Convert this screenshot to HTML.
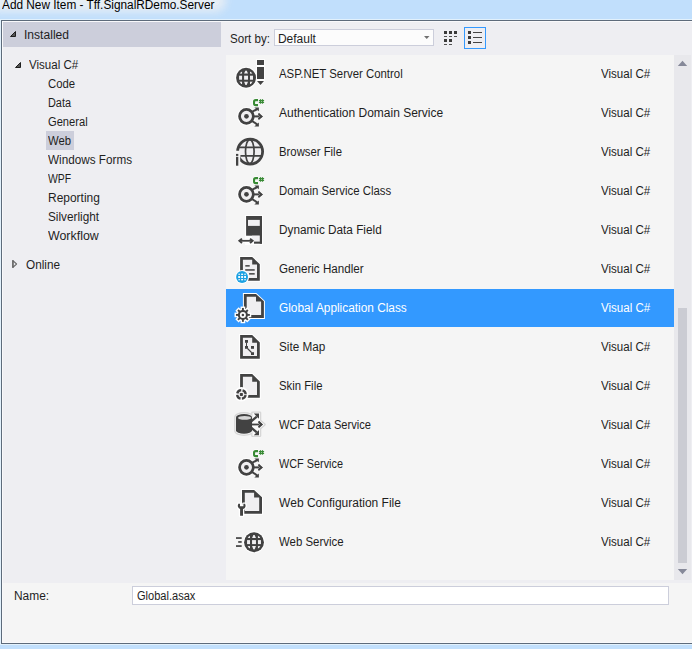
<!DOCTYPE html>
<html><head><meta charset="utf-8"><style>
html,body{margin:0;padding:0;}
body{width:692px;height:649px;overflow:hidden;position:relative;background:#c1dffc;font-family:"Liberation Sans",sans-serif;}
.r{position:absolute;}
.t{position:absolute;font-size:12px;line-height:15px;white-space:nowrap;transform-origin:0 0;}
</style></head><body>
<div class="r" style="left:-6px;top:-4px;width:226px;height:10px;border-radius:5px;background:rgba(232,238,244,0.95);box-shadow:0 0 9px 6px rgba(232,238,244,0.95);"></div>
<div class="r" style="left:0;top:19px;width:692px;height:626px;background:#e2f1fc;"></div>
<div class="r" style="left:1px;top:20px;width:700px;height:622px;border:1px solid #5d6b7b;border-right:none;background:#f9f9fb;"></div>
<div class="r" style="left:3px;top:22px;width:689px;height:561px;background:#eeeef2;"></div>
<div class="r" style="left:3px;top:583px;width:689px;height:59px;background:#f5f5f5;"></div>
<div class="r" style="left:3px;top:22px;width:218px;height:25px;background:#cccedb;"></div>
<div class="r" style="left:46px;top:131px;width:28px;height:19px;background:#cccedb;"></div>
<div class="r" style="left:226px;top:55px;width:448px;height:525px;background:#f5f5f5;"></div>
<div class="r" style="left:226px;top:289px;width:448px;height:38px;background:#3399ff;"></div>
<div class="r" style="left:674px;top:55px;width:17px;height:525px;background:#e8e8ec;"></div>
<div class="r" style="left:678px;top:308px;width:9px;height:255px;background:#cbccd3;"></div>
<div class="r" style="left:274px;top:29px;width:158px;height:15px;border:1px solid #cccedb;background:#fcfcfc;"></div>
<div class="r" style="left:464px;top:27px;width:20px;height:20px;border:1px solid #3399ff;background:#eeeef2;"></div>
<div class="r" style="left:132px;top:586px;width:535px;height:17px;border:1px solid #cccedb;background:#fff;"></div>
<svg class="r" style="left:0;top:0" width="692" height="649" viewBox="0 0 692 649">
<path d="M10.5 36.5 L15.5 36.5 L15.5 31.5 Z" fill="#555" stroke="#1e1e1e" stroke-width="1" stroke-linejoin="round"/>
<path d="M15.5 67.5 L20.5 67.5 L20.5 62.5 Z" fill="#555" stroke="#1e1e1e" stroke-width="1" stroke-linejoin="round"/>
<path d="M12.9 260.6 L16.6 264 L12.9 267.4 Z" fill="none" stroke="#6a6a6a" stroke-width="1.1" stroke-linejoin="round"/><rect x="12.2" y="260.2" width="1.4" height="7.6" fill="#666"/>
<path d="M677.8 66 L687.2 66 L682.5 60.8 Z" fill="#868999"/>
<path d="M677.8 569 L687.2 569 L682.5 574.2 Z" fill="#868999"/>
<path d="M424 36 L429.5 36 L426.75 39 Z" fill="#717171"/>
<rect x="444" y="31" width="3" height="3" fill="#3a3a3a"/>
<rect x="449" y="31" width="3" height="3" fill="#3a3a3a"/>
<rect x="454" y="31" width="3" height="3" fill="#3a3a3a"/>
<rect x="444" y="39" width="3" height="3" fill="#3a3a3a"/>
<rect x="449" y="39" width="3" height="3" fill="#3a3a3a"/>
<rect x="444" y="36" width="3" height="1" fill="#505050"/>
<rect x="449" y="36" width="3" height="1" fill="#505050"/>
<rect x="454" y="36" width="3" height="1" fill="#505050"/>
<rect x="444" y="44" width="3" height="1" fill="#505050"/>
<rect x="449" y="44" width="3" height="1" fill="#505050"/>
<rect x="468" y="31" width="3" height="3" fill="#3a3a3a"/>
<rect x="473" y="32" width="9" height="1" fill="#444"/>
<rect x="468" y="36" width="3" height="3" fill="#3a3a3a"/>
<rect x="473" y="37" width="9" height="1" fill="#444"/>
<rect x="468" y="41" width="3" height="3" fill="#3a3a3a"/>
<rect x="473" y="42" width="9" height="1" fill="#444"/>
<circle cx="246.05" cy="77.8" r="10.95" fill="#fff" opacity="0.9"/><circle cx="246.05" cy="77.8" r="9.95" fill="#424242"/><clipPath id="g0"><circle cx="246.05" cy="77.8" r="7.6"/></clipPath><g clip-path="url(#g0)" fill="#f0eff1"><rect x="238.05" y="69.8" width="4.0" height="3.8"/><polygon points="244.10000000000002,73.6 248.0,73.6 246.65,70.6 245.45000000000002,70.6"/><rect x="250.0" y="69.8" width="4.05" height="3.8"/><rect x="239.10000000000002" y="75.7" width="2.95" height="4.0"/><rect x="244.10000000000002" y="75.7" width="3.9" height="4.0"/><rect x="250.0" y="75.7" width="3.0" height="4.0"/><rect x="238.05" y="81.7" width="4.0" height="4.1"/><polygon points="244.10000000000002,81.7 248.0,81.7 246.65,85.0 245.45000000000002,85.0"/><rect x="250.0" y="81.7" width="4.05" height="4.1"/></g>
<g fill="#fff" opacity="0.8"><rect x="256" y="59" width="9" height="7"/><rect x="256" y="66" width="9" height="14"/><polygon points="255.5,80 265.5,80 260.5,86.5"/></g>
<rect x="257" y="60" width="7" height="5" fill="#424242"/><rect x="257" y="67" width="7" height="12" fill="#424242"/><polygon points="257,81 264,81 260.5,85" fill="#424242"/>
<circle cx="246.45" cy="116.35" r="9.4" fill="#fff" opacity="0.85"/><circle cx="246.45" cy="116.35" r="6.9" fill="#f0eff1" stroke="#424242" stroke-width="2.75"/><circle cx="246.45" cy="116.35" r="2.35" fill="#424242"/><rect x="254" y="115.4" width="5" height="2" fill="#424242"/><polygon points="258.2,113 263,116.4 258.2,119.9 259.6,116.4" fill="#424242"/><polyline points="258.5,113.6 261.3,116.4 258.5,119.2" fill="none" stroke="#424242" stroke-width="1.9"/><line x1="252" y1="111.8" x2="257.4" y2="109" stroke="#424242" stroke-width="2"/><polygon points="254.3,107.4 258.9,107.4 258.9,111.3" fill="#424242"/><line x1="252" y1="120.9" x2="257.4" y2="124.6" stroke="#424242" stroke-width="2"/><polygon points="254.3,126.6 258.9,126.6 258.9,122.4" fill="#424242"/><path d="M258,100.10000000000001 H255.6 A1.6,1.6 0 0 0 254.05,101.7 V103.5 A1.6,1.6 0 0 0 255.6,105.10000000000001 H258" fill="none" stroke="#fff" stroke-width="3.6" opacity="0.7"/><path d="M258,100.10000000000001 H255.6 A1.6,1.6 0 0 0 254.05,101.7 V103.5 A1.6,1.6 0 0 0 255.6,105.10000000000001 H258" fill="none" stroke="#388a34" stroke-width="2.1"/><g stroke="#388a34" stroke-width="1.2"><line x1="260.5" y1="99.2" x2="260.5" y2="103.7"/><line x1="262.5" y1="99.2" x2="262.5" y2="103.7"/><line x1="258.9" y1="100.60000000000001" x2="264.09999999999997" y2="100.60000000000001"/><line x1="258.9" y1="102.4" x2="264.09999999999997" y2="102.4"/></g>
<clipPath id="bf"><path d="M230,130 H270 V170 H240.2 V150.8 H230 Z"/></clipPath>
<g clip-path="url(#bf)"><circle cx="250.1" cy="151.55" r="12.5" fill="#f0eff1" stroke="#424242" stroke-width="2.8"/><ellipse cx="249.79999999999998" cy="151.55" rx="4.3" ry="12" fill="none" stroke="#424242" stroke-width="1.7"/><clipPath id="bfc"><circle cx="250.1" cy="151.55" r="12"/></clipPath><g clip-path="url(#bfc)"><line x1="236" y1="147.3" x2="264" y2="147.3" stroke="#424242" stroke-width="1.7"/><line x1="240.3" y1="155.8" x2="264" y2="155.8" stroke="#424242" stroke-width="1.7"/></g></g>
<rect x="236" y="153.9" width="2.3" height="2" fill="#424242"/><rect x="236" y="156.8" width="2.3" height="8.9" fill="#424242"/>
<circle cx="246.45" cy="194.35" r="9.4" fill="#fff" opacity="0.85"/><circle cx="246.45" cy="194.35" r="6.9" fill="#f0eff1" stroke="#424242" stroke-width="2.75"/><circle cx="246.45" cy="194.35" r="2.35" fill="#424242"/><rect x="254" y="193.4" width="5" height="2" fill="#424242"/><polygon points="258.2,191 263,194.4 258.2,197.9 259.6,194.4" fill="#424242"/><polyline points="258.5,191.6 261.3,194.4 258.5,197.2" fill="none" stroke="#424242" stroke-width="1.9"/><line x1="252" y1="189.8" x2="257.4" y2="187" stroke="#424242" stroke-width="2"/><polygon points="254.3,185.4 258.9,185.4 258.9,189.3" fill="#424242"/><line x1="252" y1="198.9" x2="257.4" y2="202.6" stroke="#424242" stroke-width="2"/><polygon points="254.3,204.6 258.9,204.6 258.9,200.4" fill="#424242"/><path d="M258,178.1 H255.6 A1.6,1.6 0 0 0 254.05,179.7 V181.5 A1.6,1.6 0 0 0 255.6,183.1 H258" fill="none" stroke="#fff" stroke-width="3.6" opacity="0.7"/><path d="M258,178.1 H255.6 A1.6,1.6 0 0 0 254.05,179.7 V181.5 A1.6,1.6 0 0 0 255.6,183.1 H258" fill="none" stroke="#388a34" stroke-width="2.1"/><g stroke="#388a34" stroke-width="1.2"><line x1="260.5" y1="177.2" x2="260.5" y2="181.7"/><line x1="262.5" y1="177.2" x2="262.5" y2="181.7"/><line x1="258.9" y1="178.6" x2="264.09999999999997" y2="178.6"/><line x1="258.9" y1="180.39999999999998" x2="264.09999999999997" y2="180.39999999999998"/></g>
<rect x="245" y="215" width="18" height="30" fill="#fff" opacity="0.8"/>
<rect x="246.1" y="216" width="15.9" height="19.7" fill="#424242"/>
<rect x="248" y="219.9" width="11.8" height="6" fill="#f0eff1"/>
<rect x="252" y="235.7" width="7.8" height="6" fill="#f0eff1"/>
<rect x="259.8" y="235" width="2.2" height="8.7" fill="#424242"/><rect x="254" y="241.6" width="8" height="2.1" fill="#424242"/>
<g fill="none" stroke="#fff" stroke-width="4" opacity="0.9"><line x1="239" y1="240.8" x2="253" y2="240.8"/></g>
<line x1="239.5" y1="240.8" x2="252.5" y2="240.8" stroke="#424242" stroke-width="1.8"/>
<polygon points="241.3,237.9 237.9,240.8 241.3,243.7 242.6,242.4 240.9,240.8 242.6,239.2" fill="#424242"/>
<polygon points="250.7,237.9 254.1,240.8 250.7,243.7 249.4,242.4 251.1,240.8 249.4,239.2" fill="#424242"/>
<polygon points="239.1,255.89999999999998 252.6,255.89999999999998 260.8,263.90000000000003 260.8,281.8 239.1,281.8" fill="#fff"/><polygon points="240.1,256.9 252.2,256.9 259.8,264.3 259.8,280.8 240.1,280.8" fill="#424242"/><polygon points="242.9,259.7 252.2,259.7 252.2,264.6 257.0,264.6 257.0,278.0 242.9,278.0" fill="#f0eff1"/>
<g fill="#424242"><rect x="245.3" y="265.1" width="4.4" height="1.5"/><rect x="245.2" y="269.2" width="9.5" height="1.5"/><rect x="249.1" y="273.1" width="5.6" height="1.5"/></g>
<circle cx="242.05" cy="277" r="7" fill="#fff"/><circle cx="242.05" cy="277" r="5.95" fill="#1ba1e2"/>
<g fill="#fff"><rect x="238.50" y="273.65" width="1.3" height="1.3"/><rect x="238.20" y="276.05" width="1.9" height="1.9"/><rect x="238.50" y="279.05" width="1.3" height="1.3"/><rect x="241.15" y="273.65" width="1.9" height="1.3"/><rect x="241.15" y="276.05" width="1.9" height="1.9"/><rect x="241.15" y="279.05" width="1.9" height="1.3"/><rect x="244.40" y="273.65" width="1.3" height="1.3"/><rect x="244.10" y="276.05" width="1.9" height="1.9"/><rect x="244.40" y="279.05" width="1.3" height="1.3"/></g>
<polygon points="242.9,293 256.4,293 264.9,300.90000000000003 264.9,318.9 242.9,318.9" fill="#fff"/><polygon points="243.9,294 256,294 263.9,301.3 263.9,317.9 243.9,317.9" fill="#424242"/><polygon points="246.70000000000002,296.8 256,296.8 256,301.6 261.09999999999997,301.6 261.09999999999997,315.09999999999997 246.70000000000002,315.09999999999997" fill="#f0eff1"/>
<g fill="#fff"><circle cx="242.9" cy="314.9" r="6.4"/><rect x="240.55" y="306.55" width="4.699999999999999" height="4.4" transform="rotate(0 242.9 314.9)"/><rect x="240.55" y="306.55" width="4.699999999999999" height="4.4" transform="rotate(45 242.9 314.9)"/><rect x="240.55" y="306.55" width="4.699999999999999" height="4.4" transform="rotate(90 242.9 314.9)"/><rect x="240.55" y="306.55" width="4.699999999999999" height="4.4" transform="rotate(135 242.9 314.9)"/><rect x="240.55" y="306.55" width="4.699999999999999" height="4.4" transform="rotate(180 242.9 314.9)"/><rect x="240.55" y="306.55" width="4.699999999999999" height="4.4" transform="rotate(225 242.9 314.9)"/><rect x="240.55" y="306.55" width="4.699999999999999" height="4.4" transform="rotate(270 242.9 314.9)"/><rect x="240.55" y="306.55" width="4.699999999999999" height="4.4" transform="rotate(315 242.9 314.9)"/></g>
<g fill="#424242"><circle cx="242.9" cy="314.9" r="5"/><rect x="241.95000000000002" y="307.95" width="1.9" height="3" transform="rotate(0 242.9 314.9)"/><rect x="241.95000000000002" y="307.95" width="1.9" height="3" transform="rotate(45 242.9 314.9)"/><rect x="241.95000000000002" y="307.95" width="1.9" height="3" transform="rotate(90 242.9 314.9)"/><rect x="241.95000000000002" y="307.95" width="1.9" height="3" transform="rotate(135 242.9 314.9)"/><rect x="241.95000000000002" y="307.95" width="1.9" height="3" transform="rotate(180 242.9 314.9)"/><rect x="241.95000000000002" y="307.95" width="1.9" height="3" transform="rotate(225 242.9 314.9)"/><rect x="241.95000000000002" y="307.95" width="1.9" height="3" transform="rotate(270 242.9 314.9)"/><rect x="241.95000000000002" y="307.95" width="1.9" height="3" transform="rotate(315 242.9 314.9)"/></g>
<circle cx="242.9" cy="314.9" r="3" fill="#fff"/><circle cx="242.9" cy="314.9" r="1.25" fill="#424242"/>
<polygon points="239.1,334 252.6,334 260.8,342.0 260.8,359.8 239.1,359.8" fill="#fff"/><polygon points="240.1,335 252.2,335 259.8,342.4 259.8,358.8 240.1,358.8" fill="#424242"/><polygon points="242.9,337.8 252.2,337.8 252.2,342.7 257.0,342.7 257.0,356.0 242.9,356.0" fill="#f0eff1"/>
<g fill="#424242"><rect x="245" y="340" width="3" height="2.8"/><rect x="245" y="346" width="3" height="2.8"/><rect x="251" y="346" width="3" height="2.8"/><rect x="251" y="352.2" width="3" height="2.8"/></g>
<rect x="246" y="342.5" width="1" height="4" fill="#424242"/><line x1="247.5" y1="348.5" x2="251.5" y2="352.5" stroke="#424242" stroke-width="1.1"/>
<polygon points="239.1,373 252.6,373 260.8,381.0 260.8,398.8 239.1,398.8" fill="#fff"/><polygon points="240.1,374 252.2,374 259.8,381.4 259.8,397.8 240.1,397.8" fill="#424242"/><polygon points="242.9,376.8 252.2,376.8 252.2,381.7 257.0,381.7 257.0,395.0 242.9,395.0" fill="#f0eff1"/>
<circle cx="241.4" cy="394.3" r="7.2" fill="#fff"/><circle cx="241.4" cy="394.3" r="5.7" fill="#f0eff1"/>
<circle cx="241.4" cy="394.4" r="4.25" fill="none" stroke="#424242" stroke-width="2.3" stroke-dasharray="5.176 1.5" stroke-dashoffset="-0.75"/>
<rect x="239.9" y="392.9" width="3" height="3" rx="0.6" fill="#424242"/>
<g fill="#fafafa" stroke="#d6d6d6" stroke-width="2.6" stroke-linejoin="round"><path d="M235.5,417 V431 A8.5,3.6 0 0 0 252.5,431 V417 A8.5,3.6 0 0 0 235.5,417 Z"/><rect x="252.5" y="412.8" width="7.5" height="23"/><polygon points="258,419 264.5,424.5 258,430"/></g>
<g fill="#fafafa"><path d="M235.5,417 V431 A8.5,3.6 0 0 0 252.5,431 V417 A8.5,3.6 0 0 0 235.5,417 Z"/><rect x="252.5" y="412.8" width="7.5" height="23"/><polygon points="258,419 264.5,424.5 258,430"/></g>
<path d="M236,417.2 V430.6 A8,3.2 0 0 0 252,430.6 V417.2 A8,3.2 0 0 0 236,417.2 Z" fill="#424242"/>
<ellipse cx="244.6" cy="417.9" rx="6.5" ry="1.9" fill="#d6d6d6"/>
<rect x="251.5" y="423.6" width="7.5" height="1.8" fill="#424242"/>
<polygon points="258.3,420.9 263,424.5 258.3,427.8 259.6,424.5" fill="#424242"/>
<polyline points="258.6,421.5 261.5,424.5 258.6,427.3" fill="none" stroke="#424242" stroke-width="1.9"/>
<line x1="251.2" y1="421.4" x2="256.8" y2="416.6" stroke="#424242" stroke-width="2.3"/>
<polygon points="253.8,413.6 259,413.6 259,418.8" fill="#424242"/>
<line x1="251.2" y1="427.6" x2="256.8" y2="432.4" stroke="#424242" stroke-width="2.3"/>
<polygon points="253.8,435.2 259,435.2 259,430" fill="#424242"/>
<circle cx="246.45" cy="467.35" r="9.4" fill="#fff" opacity="0.85"/><circle cx="246.45" cy="467.35" r="6.9" fill="#f0eff1" stroke="#424242" stroke-width="2.75"/><circle cx="246.45" cy="467.35" r="2.35" fill="#424242"/><rect x="254" y="466.4" width="5" height="2" fill="#424242"/><polygon points="258.2,464 263,467.4 258.2,470.9 259.6,467.4" fill="#424242"/><polyline points="258.5,464.6 261.3,467.4 258.5,470.2" fill="none" stroke="#424242" stroke-width="1.9"/><line x1="252" y1="462.8" x2="257.4" y2="460" stroke="#424242" stroke-width="2"/><polygon points="254.3,458.4 258.9,458.4 258.9,462.3" fill="#424242"/><line x1="252" y1="471.9" x2="257.4" y2="475.6" stroke="#424242" stroke-width="2"/><polygon points="254.3,477.6 258.9,477.6 258.9,473.4" fill="#424242"/><path d="M258,451.09999999999997 H255.6 A1.6,1.6 0 0 0 254.05,452.7 V454.5 A1.6,1.6 0 0 0 255.6,456.09999999999997 H258" fill="none" stroke="#fff" stroke-width="3.6" opacity="0.7"/><path d="M258,451.09999999999997 H255.6 A1.6,1.6 0 0 0 254.05,452.7 V454.5 A1.6,1.6 0 0 0 255.6,456.09999999999997 H258" fill="none" stroke="#388a34" stroke-width="2.1"/><g stroke="#388a34" stroke-width="1.2"><line x1="260.5" y1="450.2" x2="260.5" y2="454.7"/><line x1="262.5" y1="450.2" x2="262.5" y2="454.7"/><line x1="258.9" y1="451.59999999999997" x2="264.09999999999997" y2="451.59999999999997"/><line x1="258.9" y1="453.4" x2="264.09999999999997" y2="453.4"/></g>
<polygon points="241,489 254.5,489 263,496.90000000000003 263,514.8 241,514.8" fill="#fff"/><polygon points="242,490 254.1,490 262,497.3 262,513.8 242,513.8" fill="#424242"/><polygon points="244.8,492.8 254.1,492.8 254.1,497.6 259.2,497.6 259.2,510.99999999999994 244.8,510.99999999999994" fill="#f0eff1"/>
<path d="M238.2,504.2 A3.5,3.5 0 0 0 240.1,509.1 V515.7 H243 V509.1 A3.5,3.5 0 0 0 245.2,504.2 L245.2,503.7 H243.4 V506.2 H240 V503.7 H238.2 Z" fill="#fff" stroke="#fff" stroke-width="2.6" stroke-linejoin="round"/>
<path d="M238.2,504.2 A3.5,3.5 0 0 0 240.1,509.1 V515.7 H243 V509.1 A3.5,3.5 0 0 0 245.2,504.2 L245.2,503.7 H243.4 V506.2 H240 V503.7 H238.2 Z" fill="#424242"/>
<circle cx="254.0" cy="542.2" r="10.95" fill="#fff" opacity="0.9"/><circle cx="254.0" cy="542.2" r="9.95" fill="#424242"/><clipPath id="g12"><circle cx="254.0" cy="542.2" r="7.6"/></clipPath><g clip-path="url(#g12)" fill="#f0eff1"><rect x="246.0" y="534.2" width="4.0" height="3.8"/><polygon points="252.05,538.0 255.95,538.0 254.6,535.0 253.4,535.0"/><rect x="257.95" y="534.2" width="4.05" height="3.8"/><rect x="247.05" y="540.1" width="2.95" height="4.0"/><rect x="252.05" y="540.1" width="3.9" height="4.0"/><rect x="257.95" y="540.1" width="3.0" height="4.0"/><rect x="246.0" y="546.1" width="4.0" height="4.1"/><polygon points="252.05,546.1 255.95,546.1 254.6,549.4000000000001 253.4,549.4000000000001"/><rect x="257.95" y="546.1" width="4.05" height="4.1"/></g>
<g fill="#424242"><rect x="236" y="537.2" width="5.7" height="1.7"/><rect x="238.2" y="541.1" width="3.5" height="1.7"/><rect x="236" y="545.2" width="5.7" height="1.7"/></g>
</svg>
<div class="t" style="left:2.10px;top:-2px;color:#000;transform:scaleX(0.9852);">Add New Item - Tff.SignalRDemo.Server</div>
<div class="t" style="left:24.00px;top:28px;color:#1e1e1e;transform:scaleX(1.0070);">Installed</div>
<div class="t" style="left:29.00px;top:58px;color:#1e1e1e;transform:scaleX(0.9608);">Visual C#</div>
<div class="t" style="left:48.40px;top:77px;color:#1e1e1e;transform:scaleX(0.9448);">Code</div>
<div class="t" style="left:48.40px;top:96px;color:#1e1e1e;transform:scaleX(0.9080);">Data</div>
<div class="t" style="left:48.40px;top:115px;color:#1e1e1e;transform:scaleX(0.9286);">General</div>
<div class="t" style="left:48.40px;top:134px;color:#1e1e1e;transform:scaleX(0.9417);">Web</div>
<div class="t" style="left:48.40px;top:153px;color:#1e1e1e;transform:scaleX(0.9767);">Windows Forms</div>
<div class="t" style="left:48.40px;top:172px;color:#1e1e1e;transform:scaleX(0.8667);">WPF</div>
<div class="t" style="left:48.40px;top:191px;color:#1e1e1e;transform:scaleX(0.9961);">Reporting</div>
<div class="t" style="left:48.40px;top:210px;color:#1e1e1e;transform:scaleX(0.9804);">Silverlight</div>
<div class="t" style="left:48.40px;top:229px;color:#1e1e1e;transform:scaleX(1.0327);">Workflow</div>
<div class="t" style="left:25.70px;top:258px;color:#1e1e1e;transform:scaleX(0.9800);">Online</div>
<div class="t" style="left:279.10px;top:67px;color:#1e1e1e;transform:scaleX(0.9492);">ASP.NET Server Control</div>
<div class="t" style="left:601.20px;top:67px;color:#1e1e1e;transform:scaleX(0.9608);">Visual C#</div>
<div class="t" style="left:279.10px;top:106px;color:#1e1e1e;transform:scaleX(1.0000);">Authentication Domain Service</div>
<div class="t" style="left:601.20px;top:106px;color:#1e1e1e;transform:scaleX(0.9608);">Visual C#</div>
<div class="t" style="left:279.10px;top:145px;color:#1e1e1e;transform:scaleX(0.9439);">Browser File</div>
<div class="t" style="left:601.20px;top:145px;color:#1e1e1e;transform:scaleX(0.9608);">Visual C#</div>
<div class="t" style="left:279.10px;top:184px;color:#1e1e1e;transform:scaleX(0.9504);">Domain Service Class</div>
<div class="t" style="left:601.20px;top:184px;color:#1e1e1e;transform:scaleX(0.9608);">Visual C#</div>
<div class="t" style="left:279.10px;top:223px;color:#1e1e1e;transform:scaleX(0.9806);">Dynamic Data Field</div>
<div class="t" style="left:601.20px;top:223px;color:#1e1e1e;transform:scaleX(0.9608);">Visual C#</div>
<div class="t" style="left:279.10px;top:262px;color:#1e1e1e;transform:scaleX(0.9682);">Generic Handler</div>
<div class="t" style="left:601.20px;top:262px;color:#1e1e1e;transform:scaleX(0.9608);">Visual C#</div>
<div class="t" style="left:279.10px;top:301px;color:#fff;transform:scaleX(0.9876);">Global Application Class</div>
<div class="t" style="left:601.20px;top:301px;color:#fff;transform:scaleX(0.9608);">Visual C#</div>
<div class="t" style="left:279.10px;top:340px;color:#1e1e1e;transform:scaleX(0.9783);">Site Map</div>
<div class="t" style="left:601.20px;top:340px;color:#1e1e1e;transform:scaleX(0.9608);">Visual C#</div>
<div class="t" style="left:279.10px;top:379px;color:#1e1e1e;transform:scaleX(0.9444);">Skin File</div>
<div class="t" style="left:601.20px;top:379px;color:#1e1e1e;transform:scaleX(0.9608);">Visual C#</div>
<div class="t" style="left:279.10px;top:418px;color:#1e1e1e;transform:scaleX(0.9253);">WCF Data Service</div>
<div class="t" style="left:601.20px;top:418px;color:#1e1e1e;transform:scaleX(0.9608);">Visual C#</div>
<div class="t" style="left:279.10px;top:457px;color:#1e1e1e;transform:scaleX(0.9056);">WCF Service</div>
<div class="t" style="left:601.20px;top:457px;color:#1e1e1e;transform:scaleX(0.9608);">Visual C#</div>
<div class="t" style="left:279.10px;top:496px;color:#1e1e1e;transform:scaleX(1.0000);">Web Configuration File</div>
<div class="t" style="left:601.20px;top:496px;color:#1e1e1e;transform:scaleX(0.9608);">Visual C#</div>
<div class="t" style="left:279.10px;top:535px;color:#1e1e1e;transform:scaleX(0.9515);">Web Service</div>
<div class="t" style="left:601.20px;top:535px;color:#1e1e1e;transform:scaleX(0.9608);">Visual C#</div>
<div class="t" style="left:230.30px;top:32px;color:#1e1e1e;transform:scaleX(0.9650);">Sort by:</div>
<div class="t" style="left:277.90px;top:32px;color:#1e1e1e;transform:scaleX(1.0000);">Default</div>
<div class="t" style="left:13.60px;top:589px;color:#1e1e1e;transform:scaleX(0.9941);">Name:</div>
<div class="t" style="left:136.70px;top:589px;color:#1e1e1e;transform:scaleX(0.9206);">Global.asax</div>
</body></html>
